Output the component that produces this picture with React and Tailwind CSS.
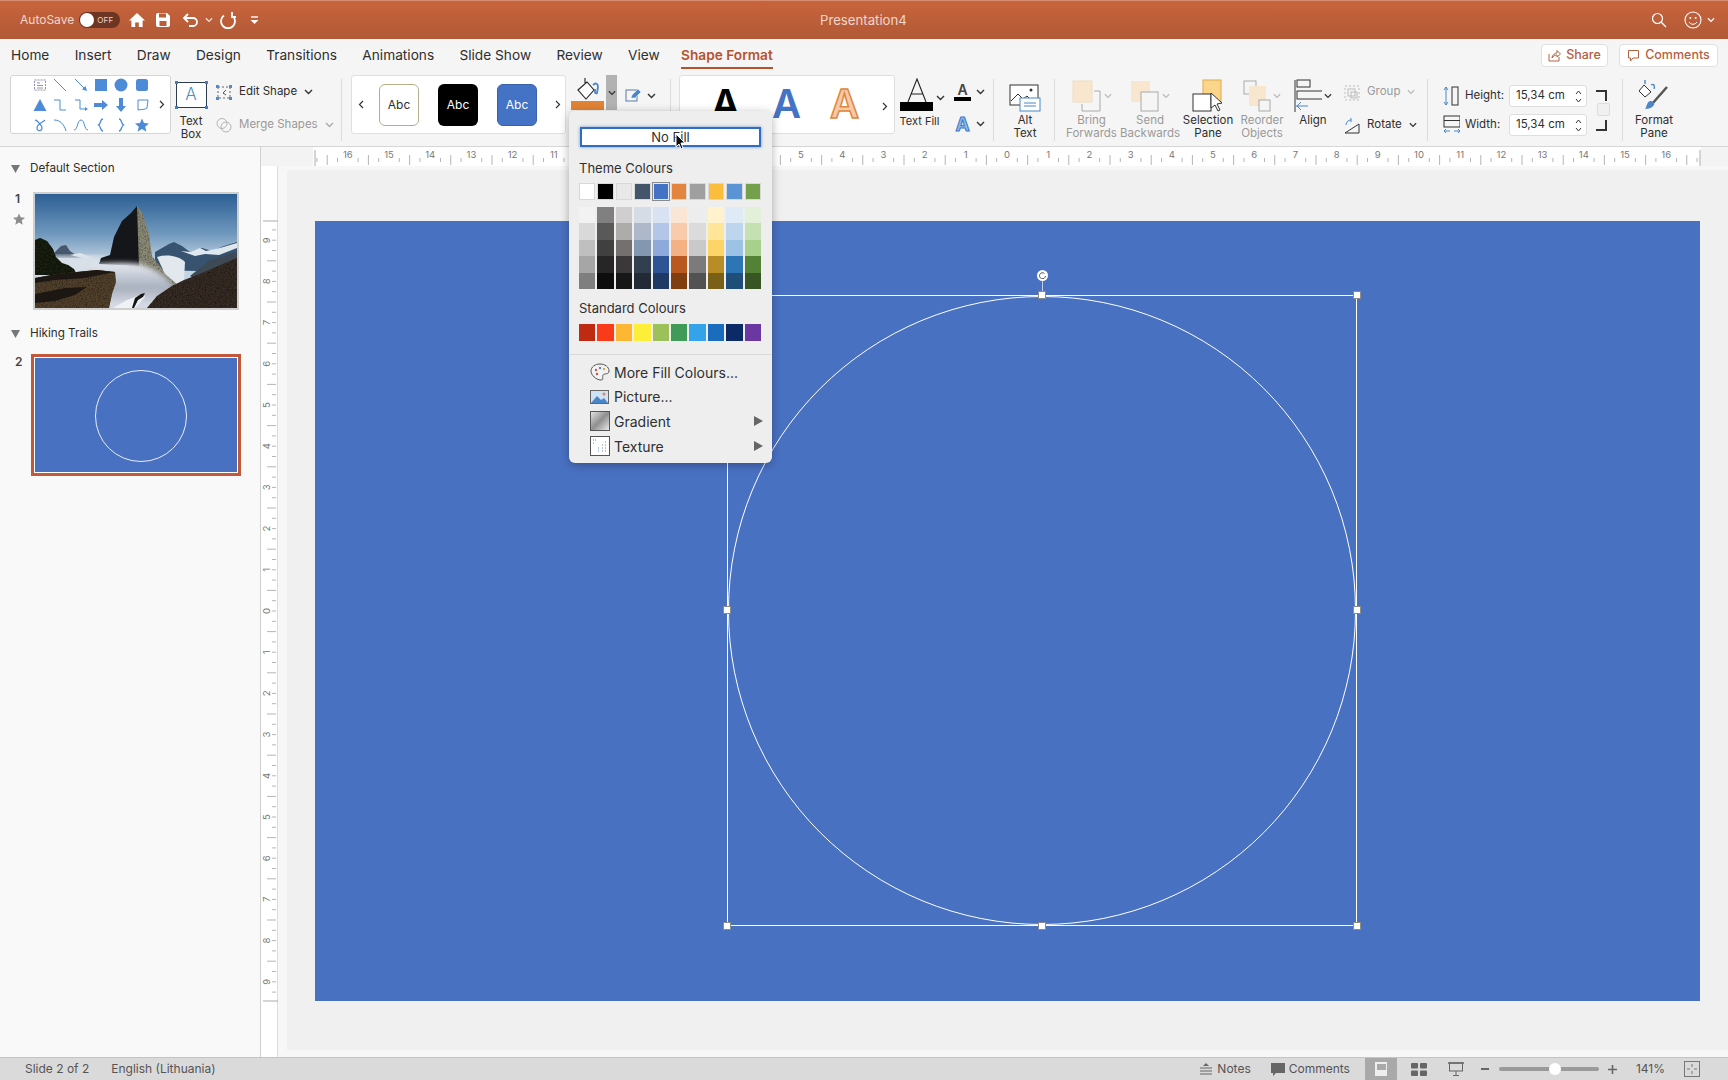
import React from "react";

const S = ({ w = 16, h = 16, vb, children, className = "" }) => (
  <svg width={w} height={h} viewBox={vb || `0 0 ${w} ${h}`} fill="none" className={"shrink-0 " + className}>{children}</svg>
);
const Chev = ({ c = "#333", w = 9 }) => (
  <S w={w} h={6} vb="0 0 9 6"><path d="M1 1l3.5 3.5L8 1" stroke={c} strokeWidth="1.4" /></S>
);
const B = "#4d8bd9";

const galleryIcons = [
  <g key="a"><rect x="1.5" y="2" width="11" height="10" stroke="#8a8fc0" strokeDasharray="2 1" /><path d="M4 5h3M4 7.5h6M4 10h6" stroke="#999" /></g>,
  <path key="b" d="M1 1l12 12" stroke={B} />,
  <g key="c"><path d="M1 1l11 11" stroke={B} /><path d="M13 13l-5-1.5 3.5-3.5z" fill={B} /></g>,
  <rect key="d" x="1" y="1" width="12" height="12" fill={B} />,
  <circle key="e" cx="7" cy="7" r="6.5" fill={B} />,
  <rect key="f" x="1" y="1" width="12" height="12" rx="2.5" fill={B} />,
  <path key="g" d="M7 1l6.5 12H.5z" fill={B} />,
  <path key="h" d="M1 2h6v10h6" stroke={B} />,
  <g key="i"><path d="M1 2h5v9h6" stroke={B} /><path d="M14 11l-3-2v4z" fill={B} /></g>,
  <path key="j" d="M0 5h8V2l6 5-6 5V9H0z" fill={B} />,
  <path key="k" d="M5 0h4v8h3l-5 6-5-6h3z" fill={B} />,
  <path key="l" d="M3 2h10l-1 8c-2 2-5 1-9 2z" stroke={B} />,
  <path key="m" d="M3 2c3 3 6 5 6 8s-5 4-5 0 5-5 8-8M2 2l2 1" stroke={B} strokeWidth="1.2" />,
  <path key="n" d="M1 2c6 0 10 4 12 11" stroke={B} />,
  <path key="o" d="M0 12c4 0 3-10 7-10s3 10 7 10" stroke={B} />,
  <path key="p" d="M9 1C6 1 7 6 4.5 7 7 8 6 13 9 13" stroke={B} strokeWidth="1.3" />,
  <path key="q" d="M5 1c3 0 2 5 4.5 6C7 8 8 13 5 13" stroke={B} strokeWidth="1.3" />,
  <path key="r" d="M7 .5l2 4.6 5 .4-3.8 3.3 1.2 5L7 11.1 2.6 13.8l1.2-5L0 5.5l5-.4z" fill={B} />,
];

const tabs = ["Home", "Insert", "Draw", "Design", "Transitions", "Animations", "Slide Show", "Review", "View"];

const theme = ["#ffffff", "#000000", "#e8e8e8", "#44546a", "#4472c4", "#e3853f", "#9f9f9f", "#fbbd3b", "#5a94d4", "#74a04c"];
const shades = [
  ["#f2f2f2", "#d9d9d9", "#bfbfbf", "#a6a6a6", "#7f7f7f"],
  ["#808080", "#595959", "#404040", "#262626", "#0d0d0d"],
  ["#d0cece", "#aeabab", "#757070", "#3a3838", "#181717"],
  ["#d6dce5", "#adb9ca", "#8497b0", "#323f4f", "#222a35"],
  ["#d9e2f3", "#b4c6e7", "#8eaadb", "#2f5496", "#1f3864"],
  ["#fbe5d5", "#f7cbac", "#f4b183", "#b9591f", "#7f3d10"],
  ["#ededed", "#dbdbdb", "#c9c9c9", "#7b7b7b", "#525252"],
  ["#fff2cc", "#fee599", "#fcd566", "#b98d26", "#7a6016"],
  ["#deeaf6", "#bdd6ee", "#9cc2e5", "#2e75b5", "#1f4e79"],
  ["#e2efd9", "#c5e0b3", "#a8d08d", "#538135", "#375623"],
];
const standard = ["#bf2b12", "#f93a1b", "#fdb733", "#fcef3a", "#9cc05a", "#3f9b57", "#35a3ea", "#1a6dbd", "#0c2a66", "#6b37a0"];

const Label = ({ a, b, dim, className = "" }) => (
  <div className={"text-center text-[11.5px] leading-[12.5px] whitespace-nowrap " + (dim ? "text-[#9a9a9a] " : "text-[#2e2e2e] ") + className}>
    <div>{a}</div>
    {b && <div>{b}</div>}
  </div>
);

const Big = ({ w, ml, icon, a, b, dim }) => (
  <div className="flex flex-col items-center" style={{ width: w, marginLeft: ml }}>
    <div className="h-[37px] flex items-end justify-center">{icon}</div>
    <Label a={a} b={b} dim={dim} className="mt-[2px]" />
  </div>
);

const Sep = ({ ml }) => <div className="w-px h-[62px] mt-[4px] bg-[#dcdcdc] shrink-0" style={{ marginLeft: ml }} />;

function HRuler() {
  const cx = 746; // zero offset within this svg (1007 - 261)
  const ticks = [];
  for (let i = -67; i <= 67; i++) {
    if (i % 4 === 0) continue;
    const x = cx + i * 10.3;
    const half = i % 2 === 0;
    ticks.push(<line key={i} x1={x} x2={x} y1={half ? 8 : 11} y2={half ? 18 : 15} stroke="#b5b5b5" />);
  }
  const nums = [];
  for (let n = -16; n <= 16; n++) {
    nums.push(<text key={n} x={cx + n * 41.2} y={11} textAnchor="middle" fontSize="9.5" fill="#777" fontFamily="Inter, sans-serif">{Math.abs(n)}</text>);
  }
  return (
    <svg width="1467" height="19" className="block">
      <rect x="52" y="0" width="1388" height="19" fill="#ffffff" />
      {ticks}
      {nums}
      <line x1="54" x2="54" y1="3" y2="19" stroke="#aaa" />
      <line x1="1439" x2="1439" y1="3" y2="19" stroke="#aaa" />
    </svg>
  );
}

function VRuler() {
  const cy = 445; // 611 - 166
  const ticks = [];
  for (let i = -37; i <= 37; i++) {
    if (i % 4 === 0) {
      ticks.push(<line key={i} x1={11} x2={15} y1={cy + i * 10.3} y2={cy + i * 10.3} stroke="#b5b5b5" />);
      continue;
    }
    const y = cy + i * 10.3;
    const half = i % 2 === 0;
    ticks.push(<line key={i} x1={half ? 6 : 11} x2={15} y1={y} y2={y} stroke="#b5b5b5" />);
  }
  const nums = [];
  for (let n = -9; n <= 9; n++) {
    const y = cy + n * 41.2;
    nums.push(<text key={n} x={6} y={y} transform={`rotate(-90 6 ${y})`} dy="3" textAnchor="middle" fontSize="9.5" fill="#777" fontFamily="Inter, sans-serif">{Math.abs(n)}</text>);
  }
  return (
    <svg width="17" height="880" className="block">
      {ticks}
      {nums}
      <line x1="2" x2="17" y1="55" y2="55" stroke="#aaa" />
      <line x1="2" x2="17" y1="835" y2="835" stroke="#aaa" />
    </svg>
  );
}

const Mountain = () => (
  <svg width="202" height="114" viewBox="0 0 202 114" className="block">
    <defs>
      <linearGradient id="sky" x1="0" y1="0" x2="0" y2="1">
        <stop offset="0" stopColor="#2c5f94" />
        <stop offset="0.35" stopColor="#6f98bd" />
        <stop offset="0.6" stopColor="#c3d4e2" />
      </linearGradient>
      <linearGradient id="fog" x1="0" y1="0" x2="0" y2="1">
        <stop offset="0" stopColor="#e6eaf0" />
        <stop offset="0.55" stopColor="#a8b0be" />
        <stop offset="1" stopColor="#dfe3ea" />
      </linearGradient>
      <filter id="bl"><feGaussianBlur stdDeviation="2.5" /></filter>
      <filter id="bl2"><feGaussianBlur stdDeviation="0.5" /></filter>
      <filter id="tex" x="0" y="0" width="100%" height="100%">
        <feTurbulence type="fractalNoise" baseFrequency="0.7" numOctaves="2" seed="4" result="n" />
        <feColorMatrix in="n" type="matrix" values="0 0 0 0 0 0 0 0 0 0 0 0 0 0 0 0 0 0 1.5 -0.55" result="d" />
        <feComposite in="d" in2="SourceAlpha" operator="in" result="dd" />
        <feMerge><feMergeNode in="SourceGraphic" /><feMergeNode in="dd" /></feMerge>
      </filter>
    </defs>
    <rect width="202" height="114" fill="url(#sky)" />
    <path d="M120 58l14-8 5-2 8 4 8 6 12-4 10 3 12-5 13-4v30l-82-2z" fill="#38536f" filter="url(#bl2)" />
    <path d="M146 57l9 1 10-4 6 3 14-3 17-5v5l-18 7-14-1-10 2z" fill="#dfe8ef" filter="url(#bl2)" />
    <path d="M155 82l20-16 27-8v20l-30 14z" fill="#3d4a54" filter="url(#bl2)" />
    <path d="M18 60l8-8 5-1 4 6 6 4 14 3H20z" fill="#46596d" filter="url(#bl2)" />
    <path d="M35 61l10-2 8 3 6 1-8 2z" fill="#dfe6ec" filter="url(#bl2)" />
    <path d="M0 62h70v20H0z" fill="#d7e0e8" filter="url(#bl)" />
    <path d="M102 12l6 8 6 20 3 22 14 18 13 12-26 14-26-20z" fill="#8e8c78" filter="url(#tex)" />
    <path d="M102 12l-6 7-9 8-8 16-4 18-9 3-2 6 40 2z" fill="#14161a" />
    <path d="M122 63c10-3 22-1 28 5l-1 18-7 4-12-10z" fill="#e3e8ee" filter="url(#bl2)" />
    <path d="M46 72c20-3 42-4 58-2 14 3 30 14 36 24l-26 20H58z" fill="url(#fog)" filter="url(#bl)" />
    <path d="M0 46l5-2 7 3 6 8 3 8 6 6 6 2 6 4 3 6H0z" fill="#1e2118" filter="url(#tex)" />
    <path d="M0 84l22-4 40-4 18 2 1 10-4 12-3 14H0z" fill="#52432f" filter="url(#tex)" />
    <path d="M0 84l22-4 40-4 18 2-30 6-30 2-20 3zM0 100l30-6 22-1-12 8-20 6-20 2z" fill="#1c1712" />
    <path d="M78 114l14-8 16-6 2 3-10 11z" fill="#eef1f5" />
    <path d="M100 104l6-4 4-1-2 4-5 3-4 8h-2z" fill="#151515" />
    <path d="M112 114l10-12 15-10 12-6 16-6 37-16v50z" fill="#382e25" filter="url(#tex)" />
  </svg>
);

const Handle = ({ className }) => <div className={"absolute w-[8px] h-[8px] bg-white border border-[#8a8a8a] " + className} />;

export default function App() {
  return (
    <div className="relative w-[1728px] h-[1080px] overflow-hidden flex flex-col bg-[#f6f6f6] font-['Inter',sans-serif] text-[#2e2e2e]">
      {/* Title bar */}
      <div className="relative h-[39px] shrink-0 flex items-center bg-gradient-to-b from-[#c8643c] to-[#b15936] border-t border-[#d98d70]">
        <span className="ml-[20px] text-[12px] text-[#f1d8cd]">AutoSave</span>
        <div className="ml-[5px] w-[41px] h-[16px] rounded-full bg-[#6d3524] flex items-center">
          <div className="w-[14px] h-[14px] rounded-full bg-white ml-px" />
          <span className="ml-[3px] text-[8px] tracking-wide text-[#eed5c9]">OFF</span>
        </div>
        <S w={18} h={18} vb="0 0 18 18" className="ml-[8px]"><path d="M9 2L1 9.5h2.4V16h3.8v-4.5h3.6V16h3.8V9.5H17z" fill="#fff" /></S>
        <S w={16} h={16} className="ml-[9px]"><path d="M1 3a2 2 0 012-2h9l3 3v9a2 2 0 01-2 2H3a2 2 0 01-2-2z" fill="#fff" /><rect x="4" y="1.5" width="7" height="4" fill="#bb5d39" /><rect x="4.5" y="9" width="7" height="5" fill="#bb5d39" /></S>
        <S w={17} h={16} className="ml-[11px]"><path d="M6 2L2 6l4 4M2 6h9a4 4 0 010 8H7" stroke="#fff" strokeWidth="1.8" /></S>
        <span className="ml-[6px]"><Chev c="#f4e0d8" w={8} /></span>
        <S w={18} h={18} className="ml-[6px]"><path d="M5 4.5A7 7 0 1013 4.5M5 1v5H1" stroke="#fff" strokeWidth="1.8" transform="matrix(-1 0 0 1 18 0)" /></S>
        <S w={9} h={9} className="ml-[13px]"><path d="M1 1h7" stroke="#fff" strokeWidth="1.4" /><path d="M0.5 4h8L4.5 8z" fill="#fff" /></S>
        <span className="absolute left-[820px] top-[10px] text-[13.2px] text-[#f0d6ca]">Presentation4</span>
        <S w={16} h={16} className="ml-auto"><circle cx="6.5" cy="6.5" r="5" stroke="#fff" strokeWidth="1.2" /><path d="M10.3 10.3L15 15" stroke="#fff" strokeWidth="1.3" /></S>
        <S w={18} h={18} className="ml-[17px]"><circle cx="9" cy="9" r="8" stroke="#fff" strokeWidth="1.1" /><circle cx="6.3" cy="7" r="1" fill="#fff" /><circle cx="11.7" cy="7" r="1" fill="#fff" /><path d="M5 11c2 3 6 3 8 0" stroke="#fff" /></S>
        <span className="ml-[5px] mr-[13px]"><Chev c="#fff" w={8} /></span>
      </div>

      {/* Tabs */}
      <div className="relative h-[36px] shrink-0 flex items-center pl-[11px] pb-[4px] bg-[#f5f5f5] text-[13.7px] text-[#2f2f2f]">
        <div className="flex items-center gap-[25.3px]">
          {tabs.map((t) => <span key={t}>{t}</span>)}
          <span className="relative font-semibold text-[#b5532e] -ml-[4px]">
            Shape Format
            <span className="absolute left-0 right-0 -bottom-[4px] h-[2px] bg-[#b5532e]" />
          </span>
        </div>
        <div className="ml-auto mr-[10px] flex items-center gap-[11px]">
          <div className="w-[67px] h-[23px] rounded-[4px] bg-white border border-[#e0e0e0] flex items-center justify-center gap-[5px] text-[12.5px] font-medium text-[#b5603f]">
            <S w={13} h={13}><path d="M1 5v7h10V8M4 9c0-3 3-5 5-5V1.5L12.5 5 9 8V6C7 6 5 7 4 9z" stroke="#b5603f" /></S>
            Share
          </div>
          <div className="w-[99px] h-[23px] rounded-[4px] bg-white border border-[#e0e0e0] flex items-center justify-center gap-[5px] text-[12.5px] font-medium text-[#b5603f]">
            <S w={13} h={13}><path d="M1.5 1.5h10v7.5H6L3.5 12V9h-2z" stroke="#b5603f" /></S>
            Comments
          </div>
        </div>
      </div>

      {/* Ribbon */}
      <div className="h-[72px] shrink-0 flex items-start bg-[#f5f5f5] border-b border-[#d6d6d6] pl-[10px]">
        {/* Shapes gallery */}
        <div className="w-[161px] h-[59px] shrink-0 bg-white border border-[#d5d5d5] rounded-[3px] flex items-center pl-[19px]">
          <div className="grid grid-cols-6 w-[122px]">
            {galleryIcons.map((g, i) => (
              <div key={i} className="h-[20px] flex items-center justify-center"><S w={14} h={14}>{g}</S></div>
            ))}
          </div>
          <svg width="6" height="9" className="ml-[7px]"><path d="M1 1l3.5 3.5L1 8" stroke="#333" strokeWidth="1.2" fill="none" /></svg>
        </div>
        {/* Text box */}
        <div className="w-[36px] ml-[2px] flex flex-col items-center shrink-0">
          <div className="relative mt-[7px] w-[31px] h-[26px] border border-[#2e3c50] bg-white flex items-center justify-center text-[17px] text-[#4f8bc9] font-light">
            A
            <span className="absolute -left-[2px] -top-[2px] w-[3px] h-[3px] bg-[#3f7fc4]" />
            <span className="absolute -right-[2px] -top-[2px] w-[3px] h-[3px] bg-[#3f7fc4]" />
            <span className="absolute -left-[2px] -bottom-[2px] w-[3px] h-[3px] bg-[#3f7fc4]" />
            <span className="absolute -right-[2px] -bottom-[2px] w-[3px] h-[3px] bg-[#3f7fc4]" />
          </div>
          <Label a="Text" b="Box" className="mt-[7px]" />
        </div>
        {/* Edit / merge */}
        <div className="ml-[7px] w-[124px] shrink-0 flex flex-col text-[11.5px]">
          <div className="mt-[8px] h-[18px] flex items-center">
            <S w={16} h={15}><rect x="2" y="2" width="12" height="11" stroke="#666" strokeDasharray="2 2" /><path d="M10 5L7 8l3 2" stroke="#555" /><rect x="0" y="0" width="3" height="3" fill={B} /><rect x="13" y="0" width="3" height="3" fill={B} /><rect x="0" y="12" width="3" height="3" fill={B} /><rect x="13" y="12" width="3" height="3" fill={B} /></S>
            <span className="ml-[7px]">Edit Shape</span>
            <span className="ml-[7px]"><Chev /></span>
          </div>
          <div className="mt-[15px] h-[18px] flex items-center text-[#9a9a9a]">
            <S w={16} h={16}><circle cx="6" cy="6.5" r="5" stroke="#b5b5b5" /><circle cx="10" cy="10" r="5" stroke="#b5b5b5" /></S>
            <span className="ml-[7px]">Merge Shapes</span>
            <span className="ml-[7px]"><Chev c="#aaa" /></span>
          </div>
        </div>
        <Sep ml={1} />
        {/* Style gallery */}
        <div className="ml-[9px] w-[215px] h-[59px] shrink-0 bg-white border border-[#e0e0e0] rounded-[3px] flex items-center pl-[6px] text-[12px]">
          <svg width="6" height="9"><path d="M5 1L1.5 4.5 5 8" stroke="#333" strokeWidth="1.2" fill="none" /></svg>
          <div className="ml-[15px] w-[40px] h-[42px] rounded-[6px] border border-[#b2b08a] bg-white flex items-center justify-center">Abc</div>
          <div className="ml-[19px] w-[40px] h-[42px] rounded-[6px] bg-black text-white flex items-center justify-center">Abc</div>
          <div className="ml-[19px] w-[40px] h-[42px] rounded-[6px] bg-[#4472c4] border border-[#3a62ab] text-white flex items-center justify-center">Abc</div>
          <svg width="6" height="9" className="ml-[18px]"><path d="M1 1l3.5 3.5L1 8" stroke="#333" strokeWidth="1.2" fill="none" /></svg>
        </div>
        {/* Fill */}
        <div className="ml-[5px] w-[33px] shrink-0 flex flex-col items-center">
          <S w={26} h={25} vb="0 0 26 25" className="mt-[1px]">
            <path d="M10 2v5M3 14l9-8 7 8-8 9z" stroke="#222" strokeWidth="1.1" fill="#fff" />
            <path d="M18 9c3-3 5-1 5 2l-1 6c-1 1-2 0-2-1l0-3" stroke="#4a86c8" strokeWidth="1.8" />
          </S>
          <div className="w-[33px] h-[9px] bg-[#e08336]" />
        </div>
        <div className="ml-[2px] w-[11px] h-[35px] shrink-0 bg-[#b2b2b2] flex items-end justify-center pb-[14px]"><Chev w={8} /></div>
        <div className="ml-[8px] w-[36px] h-[35px] shrink-0 flex items-center">
          <S w={17} h={15} className="mt-[6px]"><rect x="1" y="2" width="11" height="11" stroke="#5a7aa8" /><path d="M6 10l1-3 6-6 3 3-6 6z" fill="#4a86c8" stroke="#fff" strokeWidth=".5" /></S>
          <span className="ml-[5px] mt-[6px]"><Chev /></span>
        </div>
        <Sep ml={9} />
        {/* WordArt */}
        <div className="ml-[8px] w-[216px] h-[59px] shrink-0 bg-white border border-[#e0e0e0] rounded-[3px] flex items-start relative overflow-hidden text-[40px] leading-[44px] font-semibold">
          <span className="absolute left-[31px] top-[6px] text-black">A</span>
          <span className="absolute left-[92px] top-[6px] text-[#4472c4]">A</span>
          <span className="absolute left-[150px] top-[6px] text-[#f6c9a8] [-webkit-text-stroke:1.5px_#e0873e]">A</span>
          <svg width="6" height="9" className="absolute right-[6px] top-[26px]"><path d="M1 1l3.5 3.5L1 8" stroke="#333" strokeWidth="1.2" fill="none" /></svg>
        </div>
        {/* Text fill */}
        <div className="ml-[2px] w-[39px] shrink-0 flex flex-col items-center">
          <S w={28} h={24} className="mt-[3px]"><path d="M5 24L14 1l9 23M8.5 16h11" stroke="#222" strokeWidth="1.1" /></S>
          <div className="w-[33px] h-[9px] bg-black" />
          <span className="mt-[4px] ml-[6px] text-[11px] leading-[12.5px] whitespace-nowrap">Text Fill</span>
        </div>
        <span className="ml-[0px] mt-[20px]"><Chev /></span>
        <div className="ml-[9px] flex flex-col items-center w-[17px] shrink-0">
          <div className="mt-[8px] text-[14px] leading-[14px] font-semibold text-[#444]">A</div>
          <div className="w-[17px] h-[4px] bg-black" />
          <div className="mt-[14px] text-[19px] leading-[20px] font-bold text-[#8db9e8] [-webkit-text-stroke:1px_#3c78c8]">A</div>
        </div>
        <div className="ml-[5px] flex flex-col">
          <span className="mt-[14px]"><Chev /></span>
          <span className="mt-[26px]"><Chev /></span>
        </div>
        <Sep ml={8} />
        {/* Alt text */}
        <Big w={56} ml={3} a="Alt" b="Text" icon={
          <S w={32} h={28}><rect x="1" y="1" width="28" height="20" stroke="#333" fill="#fff" /><path d="M2 17l7-7 5 5 4-3 4 4" stroke="#333" /><circle cx="22" cy="6" r="1.5" fill="#333" /><rect x="11" y="14" width="20" height="13" stroke="#4a86c8" fill="#fff" /><path d="M15 19h12M15 22h12" stroke="#4a86c8" /></S>
        } />
        <Sep ml={1} />
        {/* Arrange */}
        <Big w={59} ml={7} dim a="Bring" b="Forwards" icon={
          <div className="flex items-center">
            <S w={30} h={32}><rect x="1" y="1" width="19" height="21" fill="#f9e6cf" stroke="#f0dcc2" /><path d="M22 11h6v20H10v-7" stroke="#aaa" /></S>
            <span className="ml-[2px]"><Chev c="#bbb" w={8} /></span>
          </div>
        } />
        <Big w={58} ml={0} dim a="Send" b="Backwards" icon={
          <div className="flex items-center">
            <S w={30} h={32}><rect x="1" y="1" width="19" height="21" fill="#f9e6cf" /><rect x="11" y="12" width="17" height="19" fill="#f5f5f5" stroke="#aaa" /></S>
            <span className="ml-[2px]"><Chev c="#bbb" w={8} /></span>
          </div>
        } />
        <Big w={58} ml={0} a="Selection" b="Pane" icon={
          <S w={32} h={33}><rect x="11" y="1" width="18" height="22" fill="#fbd68a" stroke="#e0a94f" /><rect x="1" y="15" width="18" height="17" fill="#fff" stroke="#333" /><path d="M19 14l0 15 4-3 3 6 2-1-3-6 5-1z" fill="#fff" stroke="#333" /></S>
        } />
        <Big w={50} ml={0} dim a="Reorder" b="Objects" icon={
          <div className="flex items-center">
            <S w={28} h={32}><rect x="1" y="1" width="12" height="13" fill="#f5f5f5" stroke="#aaa" /><rect x="6" y="6" width="17" height="20" fill="#f9e6cf" /><rect x="16" y="20" width="11" height="11" fill="#f5f5f5" stroke="#aaa" /></S>
            <span className="ml-[2px]"><Chev c="#bbb" w={8} /></span>
          </div>
        } />
        <Big w={50} ml={1} a="Align" icon={
          <div className="flex items-center">
            <S w={28} h={33}><path d="M1 1v32" stroke="#333" /><rect x="3" y="1" width="13" height="7" stroke="#333" /><rect x="3" y="12" width="26" height="8" stroke="#333" /><path d="M14 27H2m5-4l-4 4 4 4" stroke="#4a86c8" /></S>
            <span className="ml-[2px]"><Chev w={8} /></span>
          </div>
        } />
        <div className="ml-[6px] w-[80px] shrink-0 flex flex-col text-[11.5px]">
          <div className="mt-[8px] h-[18px] flex items-center text-[#9a9a9a]">
            <S w={17} h={17}><rect x="1" y="2" width="14" height="14" stroke="#bbb" strokeDasharray="2 2" /><rect x="4" y="5" width="7" height="7" stroke="#bbb" /><rect x="7" y="8" width="6" height="6" stroke="#bbb" /></S>
            <span className="ml-[6px]">Group</span>
            <span className="ml-[7px]"><Chev c="#bbb" w={8} /></span>
          </div>
          <div className="mt-[15px] h-[18px] flex items-center">
            <S w={17} h={17}><path d="M1 16L15 7v9z" stroke="#333" /><path d="M2 8a5 5 0 015-5M7 1v4" stroke="#4a86c8" /></S>
            <span className="ml-[6px]">Rotate</span>
            <span className="ml-[7px]"><Chev w={8} /></span>
          </div>
        </div>
        <Sep ml={3} />
        {/* Size */}
        <div className="relative ml-[15px] w-[172px] shrink-0 flex flex-col text-[11.5px]">
          <div className="mt-[10px] h-[22px] flex items-center">
            <S w={17} h={20}><path d="M3 1v18M1 4l2-3 2 3M1 16l2 3 2-3" stroke="#4a86c8" /><rect x="9" y="1" width="6" height="18" stroke="#333" /></S>
            <span className="ml-[5px] w-[44px]">Height:</span>
            <div className="w-[78px] h-[22px] bg-white border border-[#dedede] rounded-[3px] flex items-center pl-[6px]">15,34 cm
              <span className="ml-auto mr-[4px] flex flex-col gap-[3px]"><svg width="7" height="5"><path d="M1 4l2.5-3L6 4" stroke="#333" fill="none" /></svg><svg width="7" height="5"><path d="M1 1l2.5 3L6 1" stroke="#333" fill="none" /></svg></span>
            </div>
            <S w={11} h={12} className="ml-[9px]"><path d="M0 1h10v10" stroke="#333" strokeWidth="2" /></S>
          </div>
          <div className="mt-[7px] h-[22px] flex items-center">
            <S w={17} h={20}><rect x="1" y="1" width="16" height="11" stroke="#333" /><path d="M1 5.5h16" stroke="#333" /><path d="M1 16h6M11 16h6M3 14l-2 2 2 2M15 14l2 2-2 2" stroke="#4a86c8" /></S>
            <span className="ml-[5px] w-[44px]">Width:</span>
            <div className="w-[78px] h-[22px] bg-white border border-[#dedede] rounded-[3px] flex items-center pl-[6px]">15,34 cm
              <span className="ml-auto mr-[4px] flex flex-col gap-[3px]"><svg width="7" height="5"><path d="M1 4l2.5-3L6 4" stroke="#333" fill="none" /></svg><svg width="7" height="5"><path d="M1 1l2.5 3L6 1" stroke="#333" fill="none" /></svg></span>
            </div>
            <S w={11} h={12} className="ml-[9px]"><path d="M0 11h10V1" stroke="#333" strokeWidth="2" /></S>
          </div>
          <div className="absolute left-[154px] top-[28px] w-[13px] h-[13px] rounded-[2px] bg-[#f0f0f0] border border-[#dcdcdc]" />
        </div>
        <Sep ml={7} />
        <Big w={62} ml={0} a="Format" b="Pane" icon={
          <S w={32} h={33}><path d="M6 6l7 7-6 5-6-6z" stroke="#333" fill="#fff" /><path d="M7 5V1M13 6c3-2 4 1 3 4" stroke="#4a86c8" strokeWidth="1.4" /><path d="M29 8L14 25" stroke="#555" strokeWidth="2.5" /><path d="M12 22c3 0 5 2 4 4-2 3-6 4-9 4 2-2 1-6 5-8z" fill="#4a86c8" /></S>
        } />
      </div>

      {/* Body */}
      <div className="flex-1 min-h-0 flex">
        {/* Slide panel */}
        <div className="w-[261px] shrink-0 bg-[#f9f9f9] border-r border-[#cfcfcf] pl-[11px] text-[11.7px]">
          <div className="mt-[13px] h-[18px] flex items-center">
            <svg width="9" height="8"><path d="M0 0h9L4.5 8z" fill="#777" /></svg>
            <span className="ml-[10px]">Default Section</span>
          </div>
          <div className="mt-[14px] flex">
            <div className="w-[22px] pl-[4px] -mt-[1px]">
              <div className="text-[12px] font-semibold text-[#444] leading-[16px]">1</div>
              <svg width="12" height="12" viewBox="0 0 14 14" className="mt-[6px] ml-[-2px]"><path d="M7 .5l2 4.6 5 .4-3.8 3.3 1.2 5L7 11.1 2.6 13.8l1.2-5L0 5.5l5-.4z" fill="#8d8d8d" /></svg>
            </div>
            <div className="border-2 border-[#cfcfcf] bg-white">
              <Mountain />
            </div>
          </div>
          <div className="mt-[15px] h-[18px] flex items-center">
            <svg width="9" height="8"><path d="M0 0h9L4.5 8z" fill="#777" /></svg>
            <span className="ml-[10px]">Hiking Trails</span>
          </div>
          <div className="mt-[11px] flex">
            <div className="w-[20px] pl-[4px] text-[12px] font-semibold text-[#444] leading-[16px]">2</div>
            <div className="w-[210px] h-[122px] border-[3px] border-[#c2593a] bg-white p-px">
              <div className="w-full h-full bg-[#4971c2] flex items-center justify-center">
                <div className="w-[92px] h-[92px] rounded-full border border-[#e8eefa] ml-[9px] mt-[2px]" />
              </div>
            </div>
          </div>
        </div>

        {/* Workspace */}
        <div className="flex-1 min-w-0 flex flex-col">
          <div className="h-[19px] shrink-0 bg-[#f3f3f3]"><HRuler /></div>
          <div className="flex-1 min-h-0 flex">
            <div className="w-[17px] shrink-0 bg-white border-r border-[#dcdcdc]"><VRuler /></div>
            <div className="flex-1 min-w-0 bg-[#f7f7f7] pl-[9px] pt-[4px]">
              <div className="h-[880px] bg-[#f0f0f0] pl-[28px] pt-[51px]">
                <div className="relative w-[1385px] h-[780px] bg-[#4971c2]">
                  {/* selected shape */}
                  <div className="absolute left-[412px] top-[74px] w-[630px] h-[631px] border border-white">
                    <div className="absolute inset-0 rounded-full border border-white" />
                    <div className="absolute left-[314px] -top-[20px] w-px h-[20px] bg-[#c0cde8]" />
                    <div className="absolute left-[309px] -top-[26px] w-[11px] h-[11px] rounded-full bg-white flex items-center justify-center">
                      <svg width="7" height="7"><path d="M5.5 1.5A3 3 0 106.5 4" stroke="#555" fill="none" /></svg>
                    </div>
                    <Handle className="-left-[5px] -top-[5px]" />
                    <Handle className="left-[310px] -top-[5px]" />
                    <Handle className="-right-[5px] -top-[5px]" />
                    <Handle className="-left-[5px] top-[310px]" />
                    <Handle className="-right-[5px] top-[310px]" />
                    <Handle className="-left-[5px] -bottom-[5px]" />
                    <Handle className="left-[310px] -bottom-[5px]" />
                    <Handle className="-right-[5px] -bottom-[5px]" />
                  </div>
                </div>
              </div>
            </div>
          </div>
        </div>
      </div>

      {/* Status bar */}
      <div className="h-[23px] shrink-0 flex items-center bg-[#dadada] border-t border-[#c4c4c4] text-[12px] text-[#555] pl-[25px]">
        <span>Slide 2 of 2</span>
        <span className="ml-[22px]">English (Lithuania)</span>
        <div className="ml-auto flex items-center">
          <S w={14} h={12}><path d="M1 5h12M1 8h12M1 11h12" stroke="#666" /><path d="M4 3l3-3 3 3z" fill="#666" /></S>
          <span className="ml-[4px]">Notes</span>
          <S w={14} h={13} className="ml-[20px]"><path d="M0 0h14v10H5l-3 3v-3H0z" fill="#666" /></S>
          <span className="ml-[4px]">Comments</span>
          <div className="ml-[15px] w-[32px] h-[22px] bg-[#a9a9a9] flex items-center justify-center">
            <S w={14} h={14}><rect x="1" y="0" width="12" height="14" fill="#eee" /><rect x="3" y="2" width="9" height="6" fill="#a9a9a9" /></S>
          </div>
          <S w={16} h={13} className="ml-[14px]"><rect x="0" y="0" width="7" height="5.5" rx="1" fill="#666" /><rect x="9" y="0" width="7" height="5.5" rx="1" fill="#666" /><rect x="0" y="7.5" width="7" height="5.5" rx="1" fill="#666" /><rect x="9" y="7.5" width="7" height="5.5" rx="1" fill="#666" /></S>
          <S w={16} h={14} className="ml-[21px]"><path d="M0 1h16" stroke="#666" strokeWidth="1.5" /><rect x="1.5" y="1" width="13" height="8" stroke="#666" /><path d="M8 9v4M5 13.5h6" stroke="#666" /></S>
          <S w={8} h={2} className="ml-[17px]"><rect width="8" height="2" fill="#666" /></S>
          <div className="relative ml-[10px] w-[100px] h-[4px] rounded-full bg-[#9a9a9a]">
            <div className="absolute left-[50px] -top-[4px] w-[12px] h-[12px] rounded-full bg-white" />
          </div>
          <S w={9} h={9} className="ml-[9px]"><path d="M0 4.5h9M4.5 0v9" stroke="#666" strokeWidth="1.6" /></S>
          <span className="ml-[19px]">141%</span>
          <S w={16} h={16} className="ml-[19px] mr-[28px]"><rect x=".5" y=".5" width="15" height="15" stroke="#777" /><path d="M3 8h3M10 8h3M8 3v3M8 10v3" stroke="#777" /></S>
        </div>
      </div>

      {/* Fill dropdown */}
      <div className="absolute left-[569px] top-[111px] w-[203px] h-[352px] bg-[#eeeeee] rounded-[6px] shadow-[0_2px_10px_rgba(0,0,0,0.3)] text-[13px] text-[#2f2f2f] pt-[16px]">
        <div className="mx-[11px] h-[20px] bg-white border-2 border-[#2f6cc8] shadow-[0_0_3px_rgba(47,108,200,0.7)] flex items-center justify-center leading-none">No Fill</div>
        <div className="mt-[13px] ml-[10px] leading-[16px]">Theme Colours</div>
        <div className="mt-[7px] ml-[10px] flex gap-[2px]">
          {theme.map((c, i) => (
            <div key={i} className={i === 4 ? "w-[16.4px] h-[17px] border border-[#e8e8e8] outline outline-1 outline-[#8a8a8a]" : "w-[16.4px] h-[17px] border border-[#d8d8d8]"} style={{ background: c }} />
          ))}
        </div>
        <div className="mt-[7px] ml-[10px] flex gap-[2px]">
          {shades.map((col, i) => (
            <div key={i} className="w-[16.4px] flex flex-col">
              {col.map((c, j) => <div key={j} className="h-[16.4px]" style={{ background: c }} />)}
            </div>
          ))}
        </div>
        <div className="mt-[11px] ml-[10px] leading-[16px]">Standard Colours</div>
        <div className="mt-[8px] ml-[10px] flex gap-[2px]">
          {standard.map((c, i) => <div key={i} className="w-[16.4px] h-[17px]" style={{ background: c }} />)}
        </div>
        <div className="mt-[13px] h-px bg-[#d8d8d8]" />
        <div className="mt-[5px] pl-[21px] pr-[9px] text-[14px]">
          <div className="h-[24.6px] flex items-center">
            <S w={20} h={18}><path d="M10 1c5 0 9 3 9 7s-5 2-6 4 1 5-2 5C6 17 1 12 1 8s4-7 9-7z" stroke="#555" fill="#f3f3f3" /><circle cx="6" cy="7" r="1.2" fill="#c9534a" /><circle cx="10" cy="5" r="1.2" fill="#4a86c8" /><circle cx="14" cy="6" r="1.2" fill="#e3a33f" /><circle cx="7" cy="11" r="1.2" fill="#c9534a" /></S>
            <span className="ml-[4px]">More Fill Colours...</span>
          </div>
          <div className="h-[24.6px] flex items-center">
            <S w={20} h={14}><rect x=".5" y=".5" width="18" height="13" fill="#cfe3f6" stroke="#666" /><path d="M1 13l6-7 4 4 3-2 4 5z" fill="#4a86c8" /><circle cx="14" cy="4" r="1.5" fill="#e3854a" /></S>
            <span className="ml-[4px]">Picture...</span>
          </div>
          <div className="h-[24.6px] flex items-center">
            <svg width="20" height="20" className="shrink-0"><defs><linearGradient id="gr" x1="0" y1="0" x2="1" y2="1"><stop offset="0" stopColor="#e6e6e6" /><stop offset="0.5" stopColor="#8f8f8f" /><stop offset="1" stopColor="#eeeeee" /></linearGradient></defs><rect x=".5" y=".5" width="19" height="19" fill="url(#gr)" stroke="#555" /></svg>
            <span className="ml-[4px]">Gradient</span>
            <svg width="9" height="10" className="ml-auto"><path d="M0 0l9 5-9 5z" fill="#666" /></svg>
          </div>
          <div className="h-[24.6px] flex items-center">
            <svg width="20" height="20" className="shrink-0"><rect x=".5" y=".5" width="19" height="19" fill="#fff" stroke="#555" /><path d="M3 4h4M3 7h2M8 12h2M12 9h2M12 12h2M12 15h2M15 6h2M15 9h2M15 12h2M15 15h2M8 15h2" stroke="#5a8ac0" strokeDasharray="1 1" /></svg>
            <span className="ml-[4px]">Texture</span>
            <svg width="9" height="10" className="ml-auto"><path d="M0 0l9 5-9 5z" fill="#666" /></svg>
          </div>
        </div>
      </div>

      {/* Cursor */}
      <svg width="13" height="18" viewBox="0 0 13 18" className="absolute left-[675px] top-[133px]">
        <path d="M1 1v13l3-3 2 5 2-1-2-5h4z" fill="#111" stroke="#fff" strokeWidth="1" />
      </svg>
    </div>
  );
}
